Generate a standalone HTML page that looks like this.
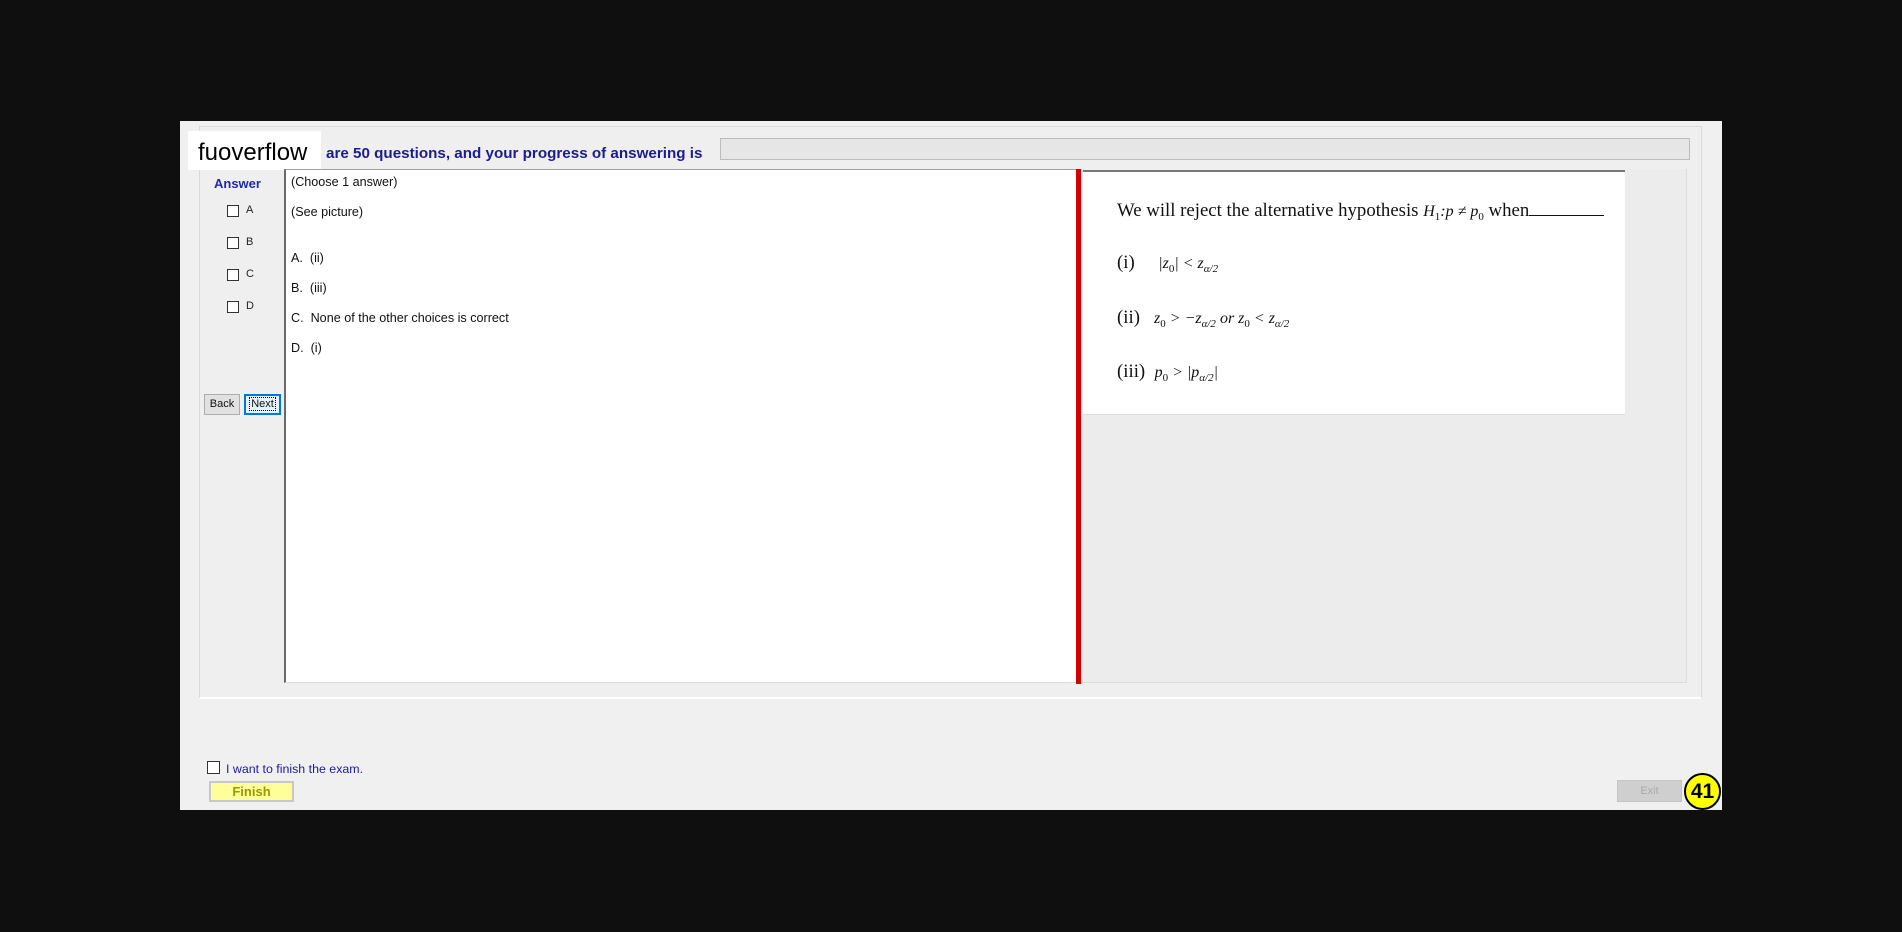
<!DOCTYPE html>
<html><head><meta charset="utf-8"><style>
*{margin:0;padding:0;box-sizing:border-box}
body{width:1902px;height:932px;background:#0f0f0f;position:relative;overflow:hidden;font-family:"Liberation Sans",Arial,sans-serif}
.a{position:absolute}
.cb{position:absolute;width:12px;height:12px;border:1px solid #333;background:#fff}
.q{position:absolute;left:291px;font-size:12.6px;color:#111}
.m{font-family:"Liberation Serif",serif;font-style:italic;font-size:16px}
.s{font-size:11px;font-style:normal}
.si{font-size:11px}
.p{position:absolute;left:1117px;font-family:'Liberation Serif',serif;font-size:18.8px;color:#111;white-space:nowrap}
</style></head><body>
<div class="a" style="left:180px;top:121px;width:1542px;height:689px;background:#f0f0f0"></div>
<div class="a" style="left:199px;top:126px;width:1503px;height:573px;border:1px solid #dadada;border-bottom:2px solid #fff;background:#efefef"></div>
<div class="a" style="left:188px;top:131px;width:133px;height:39px;background:#fff"></div>
<div class="a" style="left:198px;top:139px;font-size:24px;color:#000">fuoverflow</div>
<div class="a" style="left:326px;top:145px;font-size:15.2px;font-weight:bold;color:#1c1c8e;white-space:nowrap">are 50 questions, and your progress of answering is</div>
<div class="a" style="left:720px;top:138px;width:970px;height:22px;background:#e6e6e6;border:1px solid #bcbcbc"></div>
<div class="a" style="left:214px;top:176px;font-size:13px;font-weight:bold;color:#1f2aa8">Answer</div>
<div class="cb" style="left:227px;top:205px"></div><div class="a" style="left:246px;top:204px;font-size:11px;color:#222">A</div>
<div class="cb" style="left:227px;top:237px"></div><div class="a" style="left:246px;top:236px;font-size:11px;color:#222">B</div>
<div class="cb" style="left:227px;top:269px"></div><div class="a" style="left:246px;top:268px;font-size:11px;color:#222">C</div>
<div class="cb" style="left:227px;top:301px"></div><div class="a" style="left:246px;top:300px;font-size:11px;color:#222">D</div>
<div class="a" style="left:204px;top:394px;width:36px;height:21px;background:#e1e1e1;border:1px solid #adadad;font-size:11px;text-align:center;line-height:19px;color:#111">Back</div>
<div class="a" style="left:244px;top:394px;width:37px;height:21px;background:#e5f1fb;border:2px solid #0078d7;font-size:11px;text-align:center;line-height:17px;color:#111"><span style="outline:1px dotted #000;padding:0 1px">Next</span></div>
<div class="a" style="left:284px;top:169px;width:793px;height:514px;background:#fff;border-left:2px solid #6a6a6a;border-top:1px solid #a0a0a0;border-bottom:1px solid #ddd"></div>
<div class="q" style="top:175px">(Choose 1 answer)</div>
<div class="q" style="top:205px">(See picture)</div>
<div class="q" style="top:251px">A.&nbsp; (ii)</div>
<div class="q" style="top:281px">B.&nbsp; (iii)</div>
<div class="q" style="top:311px">C.&nbsp; None of the other choices is correct</div>
<div class="q" style="top:341px">D.&nbsp; (i)</div>
<div class="a" style="left:1076px;top:169px;width:5px;height:515px;background:#d40000"></div>
<div class="a" style="left:1081px;top:169px;width:606px;height:514px;background:#ececec;border-right:1px solid #dcdcdc;border-bottom:1px solid #dcdcdc"></div>
<div class="a" style="left:1083px;top:170px;width:542px;height:245px;background:#fff;border-top:2px solid #777;border-bottom:1px solid #ddd"></div>
<div class="p" style="top:200px">We will reject the alternative hypothesis <span class="m">H<sub class="s">1</sub>:p ≠ p<sub class="s">0</sub></span> when<span style="display:inline-block;width:75px;border-bottom:1px solid #111"></span></div>
<div class="p" style="top:252px">(i)&nbsp;&nbsp;&nbsp;&nbsp; <span class="m">|z<sub class="s">0</sub>| &lt; z<sub class="si">α/2</sub></span></div>
<div class="p" style="top:307px">(ii)&nbsp;&nbsp; <span class="m">z<sub class="s">0</sub> &gt; −z<sub class="si">α/2</sub> or z<sub class="s">0</sub> &lt; z<sub class="si">α/2</sub></span></div>
<div class="p" style="top:361px">(iii)&nbsp; <span class="m">p<sub class="s">0</sub> &gt; |p<sub class="si">α/2</sub>|</span></div>
<div class="cb" style="left:207px;top:761px;width:13px;height:13px"></div>
<div class="a" style="left:226px;top:762px;font-size:12.4px;color:#1c1c9e">I want to finish the exam.</div>
<div class="a" style="left:209px;top:781px;width:85px;height:21px;background:#ffff99;border:2px solid #c8c8c8;font-size:13px;font-weight:bold;color:#999900;text-align:center;line-height:17px">Finish</div>
<div class="a" style="left:1617px;top:780px;width:65px;height:22px;background:#cfcfcf;border:1px solid #c4c4c4;font-size:11px;color:#aaa;text-align:center;line-height:20px">Exit</div>
<div class="a" style="left:1684px;top:773px;width:37px;height:37px;border-radius:50%;background:#ffff00;border:2px solid #000;font-size:21px;font-weight:bold;text-align:center;line-height:33px;color:#000">41</div>
</body></html>
